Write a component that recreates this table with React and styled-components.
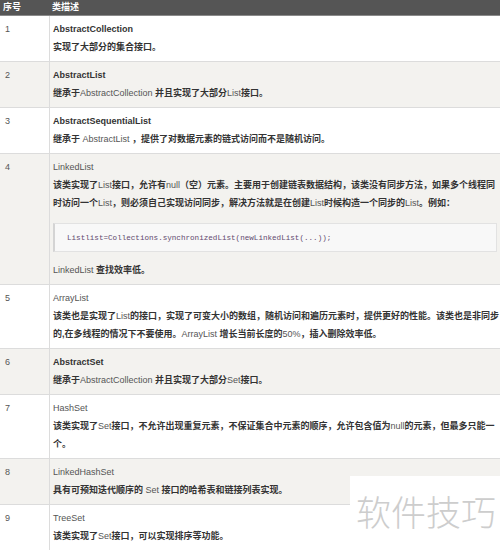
import React from "react";
import styled, { createGlobalStyle } from "styled-components";

const GlobalStyle = createGlobalStyle`
  html, body { margin: 0; padding: 0; background: #fff; }
  body { font-family: "Liberation Sans", "Noto Sans CJK SC", sans-serif; }
`;

const Page = styled.div`
  position: relative;
  width: 500px;
  height: 550px;
  overflow: hidden;
  font-size: 9px;
  color: #333;
`;

const HeaderRow = styled.div`
  display: grid;
  grid-template-columns: 49px 1fr;
  height: 15px;
  background: #555;
  border-bottom: 1px solid #8a8a8a;
`;

const HeadCell = styled.div`
  padding: 0 3px;
  line-height: 15px;
  color: #fff;
  font-weight: bold;
`;

const Row = styled.div`
  display: grid;
  grid-template-columns: 50px 1fr;
  background: ${(p) => (p.$alt ? "#f3f2ef" : "#fff")};
  border-bottom: 1px solid #dcdcdc;
`;

const NumCell = styled.div`
  border-right: 1px solid #dcdcdc;
  padding: 5px 5px;
  line-height: 17px;
  color: #555;
`;

const DescCell = styled.div`
  padding: 5px 3px;
  min-width: 0;
`;

const Title = styled.div`
  line-height: 17px;
  font-weight: ${(p) => (p.$bold ? "bold" : "normal")};
  color: ${(p) => (p.$bold ? "#333" : "#555")};
`;

const Desc = styled.div`
  line-height: 18px;
  font-weight: bold;
  color: #333;
  white-space: nowrap;
`;

const L = styled.span`
  font-weight: normal;
  color: #555;
`;

const Plain = styled.div`
  line-height: 18px;
  color: #555;
  white-space: nowrap;
`;

const Strong = styled.span`
  font-weight: bold;
  color: #333;
`;

const CodeBlock = styled.div`
  margin: 11px 0 9px;
  height: 27px;
  display: flex;
  align-items: center;
  padding-left: 12px;
  background: #f8f8f8;
  border: 1px solid #e2e2e2;
  border-left: 2px solid #d4d4d4;
`;

const Code = styled.code`
  font-family: "Liberation Mono", "DejaVu Sans Mono", monospace;
  font-size: 7.6px;
  color: #62496f;
`;

const Watermark = styled.div`
  position: absolute;
  left: 350px;
  top: 476px;
  width: 150px;
  height: 74px;
  background: #fff;
  padding: 17px 0 0 6px;
  box-sizing: border-box;
  font-family: "Noto Sans CJK SC", sans-serif;
  font-weight: 300;
  font-size: 35px;
  line-height: 36px;
  color: #cdcdcd;
  white-space: nowrap;
`;

export default function App() {
  return (
    <>
      <GlobalStyle />
      <Page>
        <HeaderRow>
          <HeadCell>序号</HeadCell>
          <HeadCell>类描述</HeadCell>
        </HeaderRow>

        <Row>
          <NumCell>1</NumCell>
          <DescCell>
            <Title $bold>AbstractCollection</Title>
            <Desc>实现了大部分的集合接口。</Desc>
          </DescCell>
        </Row>

        <Row $alt>
          <NumCell>2</NumCell>
          <DescCell>
            <Title $bold>AbstractList</Title>
            <Desc>
              继承于<L>AbstractCollection </L>并且实现了大部分<L>List</L>接口。
            </Desc>
          </DescCell>
        </Row>

        <Row>
          <NumCell>3</NumCell>
          <DescCell>
            <Title $bold>AbstractSequentialList</Title>
            <Desc>
              继承于<L> AbstractList </L>，提供了对数据元素的链式访问而不是随机访问。
            </Desc>
          </DescCell>
        </Row>

        <Row $alt>
          <NumCell>4</NumCell>
          <DescCell>
            <Title>LinkedList</Title>
            <Desc>
              该类实现了<L>List</L>接口，允许有<L>null</L>（空）元素。主要用于创建链表数据结构，该类没有同步方法，如果多个线程同
            </Desc>
            <Desc>
              时访问一个<L>List</L>，则必须自己实现访问同步，解决方法就是在创建<L>List</L>时候构造一个同步的<L>List</L>。例如：
            </Desc>
            <CodeBlock>
              <Code>Listlist=Collections.synchronizedList(newLinkedList(...));</Code>
            </CodeBlock>
            <Plain>
              LinkedList <Strong>查找效率低。</Strong>
            </Plain>
          </DescCell>
        </Row>

        <Row>
          <NumCell>5</NumCell>
          <DescCell>
            <Title>ArrayList</Title>
            <Desc>
              该类也是实现了<L>List</L>的接口，实现了可变大小的数组，随机访问和遍历元素时，提供更好的性能。该类也是非同步
            </Desc>
            <Desc>
              的,在多线程的情况下不要使用。<L>ArrayList </L>增长当前长度的<L>50%</L>，插入删除效率低。
            </Desc>
          </DescCell>
        </Row>

        <Row $alt>
          <NumCell>6</NumCell>
          <DescCell>
            <Title $bold>AbstractSet</Title>
            <Desc>
              继承于<L>AbstractCollection </L>并且实现了大部分<L>Set</L>接口。
            </Desc>
          </DescCell>
        </Row>

        <Row>
          <NumCell>7</NumCell>
          <DescCell>
            <Title>HashSet</Title>
            <Desc>
              该类实现了<L>Set</L>接口，不允许出现重复元素，不保证集合中元素的顺序，允许包含值为<L>null</L>的元素，但最多只能一
            </Desc>
            <Desc>个。</Desc>
          </DescCell>
        </Row>

        <Row $alt>
          <NumCell>8</NumCell>
          <DescCell>
            <Title>LinkedHashSet</Title>
            <Desc>
              具有可预知迭代顺序的<L> Set </L>接口的哈希表和链接列表实现。
            </Desc>
          </DescCell>
        </Row>

        <Row>
          <NumCell>9</NumCell>
          <DescCell>
            <Title>TreeSet</Title>
            <Desc>
              该类实现了<L>Set</L>接口，可以实现排序等功能。
            </Desc>
          </DescCell>
        </Row>

        <Watermark>软件技巧</Watermark>
      </Page>
    </>
  );
}
